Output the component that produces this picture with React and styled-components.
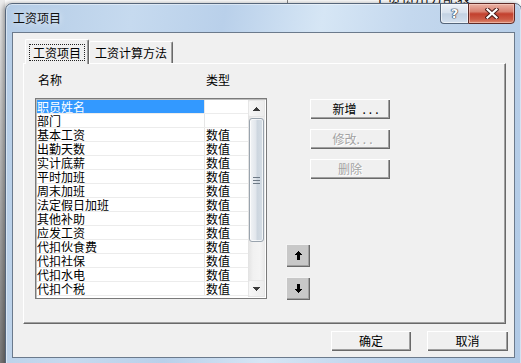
import React from "react";
import styled, { createGlobalStyle } from "styled-components";

const FONT = `"Noto Sans CJK SC", "Noto Sans CJK JP", "Noto Sans", sans-serif`;

const Global = createGlobalStyle`
  html, body { margin: 0; padding: 0; background: #fff; overflow: hidden; }
  body { font-family: ${FONT}; font-size: 12px; color: #000; }
  * { box-sizing: border-box; }
`;

const Desktop = styled.div`
  position: relative;
  width: 521px;
  height: 363px;
  overflow: hidden;
  background: linear-gradient(#ececec, #7c7c7c) left top / 5px 100% no-repeat, #fff;
`;

const BehindText = styled.div`
  position: absolute;
  top: -11px;
  left: 373px;
  font-size: 14px;
  line-height: 16px;
  color: #111;
  white-space: nowrap;
`;

const BehindLine = styled.div`
  position: absolute;
  top: 0;
  left: 287px;
  width: 1px;
  height: 4px;
  background: #8a8a8a;
`;

const Window = styled.div`
  position: absolute;
  left: 5px;
  top: 3px;
  width: 517px;
  height: 372px;
  border: 1px solid #56667a;
  border-radius: 7px 7px 0 0;
  background: linear-gradient(100deg, #b4cce6 0%, #c6daef 22%, #b9d0ea 38%, #d6e6f5 55%, #c4d8ee 70%, #b0c9e5 100%);
  box-shadow: inset 0 0 0 1px rgba(255, 255, 255, 0.45), -2px 0 5px rgba(0, 0, 0, 0.35);
  display: flex;
  flex-direction: column;
`;

const TitleBar = styled.div`
  height: 28px;
  display: flex;
  align-items: center;
  padding: 0 0 2px 7px;
  font-size: 12px;
  color: #101010;
  text-shadow: 0 0 6px rgba(255, 255, 255, 0.9);
`;

const CaptionButtons = styled.div`
  position: absolute;
  top: -1px;
  right: 6px;
  display: flex;
  height: 21px;
`;

const HelpButton = styled.div`
  width: 28px;
  height: 21px;
  border: 1px solid #55657a;
  border-right: none;
  border-radius: 0 0 0 4px;
  background: linear-gradient(#edf2f8 0%, #d8e2ee 45%, #c3d2e3 52%, #d4e0ee 100%);
  box-shadow: inset 0 0 0 1px rgba(255, 255, 255, 0.6);
  display: flex;
  align-items: center;
  justify-content: center;
  font-family: "DejaVu Sans", sans-serif;
  font-weight: bold;
  font-size: 13px;
  color: #fff;
  text-shadow: 0 0 1px #2e3c50, 0 0 1px #2e3c50, 0 0 1px #2e3c50, 0 0 1px #2e3c50;
`;

const CloseButton = styled.div`
  width: 47px;
  height: 21px;
  border: 1px solid #5e2a26;
  border-radius: 0 0 4px 0;
  background: linear-gradient(#eab3a6 0%, #d8806f 40%, #c2402e 52%, #cc5a45 80%, #dc8a70 100%);
  box-shadow: inset 0 0 0 1px rgba(255, 220, 210, 0.5);
  display: flex;
  align-items: center;
  justify-content: center;
`;

const FrameBody = styled.div`
  flex: 1;
  padding: 0 6px;
`;

const Client = styled.div`
  height: 326px;
  border: 1px solid #6b7a8c;
  background: #f0f0f0;
  display: flex;
  flex-direction: column;
`;

const TabStrip = styled.div`
  display: flex;
  align-items: flex-end;
  height: 25px;
  margin: 6px 0 0 12px;
  position: relative;
  z-index: 1;
`;

const Tab = styled.div`
  width: ${(p) => p.$w}px;
  height: ${(p) => (p.$active ? 25 : 22)}px;
  margin-bottom: ${(p) => (p.$active ? 0 : 1)}px;
  background: #f0f0f0;
  border-top: 1px solid #fff;
  border-left: 1px solid #fff;
  border-right: 1px solid #696969;
  box-shadow: inset -1px 0 #a0a0a0;
  border-radius: 2px 2px 0 0;
  display: flex;
  align-items: ${(p) => (p.$active ? "flex-start" : "center")};
  padding-top: ${(p) => (p.$active ? 4 : 0)}px;
  justify-content: center;
  font-size: 12px;
  line-height: 15px;
`;

const FocusText = styled.span`
  border: 1px dotted #222;
  padding: 0 3px;
  line-height: 15px;
`;

const Panel = styled.div`
  width: 483px;
  height: 261px;
  margin: -1px 0 0 10px;
  border-top: 1px solid #fff;
  border-left: 1px solid #fff;
  border-right: 1px solid #696969;
  border-bottom: 1px solid #696969;
  box-shadow: inset -1px -1px #a0a0a0;
  padding-left: 11px;
  display: flex;
  align-items: flex-start;
`;

const LeftCol = styled.div`
  padding-top: 9px;
  display: flex;
  flex-direction: column;
`;

const HeaderRow = styled.div`
  display: flex;
  height: 14px;
  line-height: 14px;
  margin-bottom: 11px;
  font-size: 12px;
`;

const HeaderCell = styled.div`
  width: ${(p) => p.$w}px;
  padding-left: 3px;
`;

const ListBox = styled.div`
  width: 232px;
  height: 201px;
  border: 1px solid #7a7a7a;
  box-shadow: inset 1px 1px #bdbdbd;
  padding: 1px;
  background: #fff;
  display: flex;
`;

const Rows = styled.div`
  flex: 1;
  display: flex;
  flex-direction: column;
`;

const Row = styled.div`
  display: flex;
  height: 14px;
  border-bottom: 1px solid #ececec;
  font-size: 12px;
  line-height: 13px;
`;

const NameCell = styled.div`
  width: 167px;
  white-space: nowrap;
  background: ${(p) => (p.$sel ? "#3399ff" : "transparent")};
  color: ${(p) => (p.$sel ? "#fff" : "#000")};
`;

const TypeCell = styled.div`
  flex: 1;
  border-left: 1px solid #e6e6e6;
  padding-left: 1px;
  white-space: nowrap;
`;

const ScrollBar = styled.div`
  width: 17px;
  display: flex;
  flex-direction: column;
  background: linear-gradient(to right, #e2e2e2 0%, #f1f1f1 30%, #f4f4f4 70%, #e8e8e8 100%);
`;

const ScrollArrow = styled.div`
  height: 17px;
  display: flex;
  align-items: center;
  justify-content: center;
  border: 1px solid #e6e6e6;
  border-radius: 2px;
  background: linear-gradient(to right, #f7f7f7, #ececec);
`;

const Thumb = styled.div`
  height: 124px;
  margin: 1px 1px 0 1px;
  border: 1px solid #9aa4ae;
  border-radius: 3px;
  background: linear-gradient(to right, #f2f4f6 0%, #e1e6ec 45%, #cdd6df 55%, #d5dde5 100%);
  box-shadow: inset 0 0 0 1px rgba(255, 255, 255, 0.7);
  display: flex;
  align-items: center;
  justify-content: center;
`;

const Track = styled.div`
  flex: 1;
`;

const ArrowCol = styled.div`
  margin-left: 19px;
  padding-top: 180px;
  display: flex;
  flex-direction: column;
  gap: 10px;
`;

const ArrowButton = styled.div`
  width: 24px;
  height: 23px;
  background: #c8c8c8;
  box-shadow: inset 1px 1px #f4f4f4, inset -1px -1px #696969, inset -2px -2px #a0a0a0;
  display: flex;
  align-items: center;
  justify-content: center;
`;

const ButtonCol = styled.div`
  padding-top: 35px;
  display: flex;
  flex-direction: column;
  gap: 10px;
`;

const Button = styled.div`
  width: ${(p) => p.$w}px;
  height: 20px;
  background: #f0f0f0;
  box-shadow: inset 1px 1px #fff, inset -1px -1px #696969, inset -2px -2px #a0a0a0;
  display: flex;
  align-items: center;
  justify-content: center;
  padding-left: ${(p) => p.$shift || 0}px;
  padding-bottom: 1px;
  font-size: 12px;
  line-height: 14px;
  white-space: nowrap;
  color: ${(p) => (p.$disabled ? "#a3a3a3" : "#000")};
  text-shadow: ${(p) => (p.$disabled ? "1px 1px #fff" : "none")};
`;

const Dots = styled.span`
  letter-spacing: 3px;
  margin-left: ${(p) => p.$gap || 0}px;
`;

const Footer = styled.div`
  display: flex;
  justify-content: flex-end;
  gap: 16px;
  margin-top: 7px;
  padding-right: 6px;
`;

const rows = [
  ["职员姓名", ""],
  ["部门", ""],
  ["基本工资", "数值"],
  ["出勤天数", "数值"],
  ["实计底薪", "数值"],
  ["平时加班", "数值"],
  ["周末加班", "数值"],
  ["法定假日加班", "数值"],
  ["其他补助", "数值"],
  ["应发工资", "数值"],
  ["代扣伙食费", "数值"],
  ["代扣社保", "数值"],
  ["代扣水电", "数值"],
  ["代扣个税", "数值"],
];

const Tri = ({ up, color = "#3a3a3a" }) => (
  <svg width="7" height="4" viewBox="0 0 7 4" shapeRendering="crispEdges">
    <path d={up ? "M3.5 0 L7 4 L0 4 Z" : "M0 0 L7 0 L3.5 4 Z"} fill={color} />
  </svg>
);

const BigArrow = ({ up }) => (
  <svg width="7" height="9" viewBox="0 0 7 9" shapeRendering="crispEdges">
    <path
      d={up ? "M3.5 0 L7 4 L5 4 L5 9 L2 9 L2 4 L0 4 Z" : "M2 0 L5 0 L5 5 L7 5 L3.5 9 L0 5 L2 5 Z"}
      fill="#000"
    />
  </svg>
);

const Grip = () => (
  <svg width="7" height="7" viewBox="0 0 7 7" shapeRendering="crispEdges">
    <path d="M0 0.5 H7 M0 3.5 H7 M0 6.5 H7" stroke="#6e7a86" strokeWidth="1" />
  </svg>
);

const CloseGlyph = () => (
  <svg width="14" height="11" viewBox="0 0 14 11">
    <path d="M2.5 1.5 L11.5 9.5 M11.5 1.5 L2.5 9.5" stroke="#4a1c18" strokeWidth="4.2" strokeLinecap="square" />
    <path d="M2.5 1.5 L11.5 9.5 M11.5 1.5 L2.5 9.5" stroke="#fff" strokeWidth="2.2" strokeLinecap="square" />
  </svg>
);

export default function App() {
  return (
    <>
      <Global />
      <Desktop>
        <BehindText>工资费用分配表</BehindText>
        <BehindLine />
        <Window>
          <TitleBar>工资项目</TitleBar>
          <CaptionButtons>
            <HelpButton>?</HelpButton>
            <CloseButton>
              <CloseGlyph />
            </CloseButton>
          </CaptionButtons>
          <FrameBody>
            <Client>
              <TabStrip>
                <Tab $active $w={64}>
                  <FocusText>工资项目</FocusText>
                </Tab>
                <Tab $w={84}>工资计算方法</Tab>
              </TabStrip>
              <Panel>
                <LeftCol>
                  <HeaderRow>
                    <HeaderCell $w={168}>名称</HeaderCell>
                    <HeaderCell $w={60}>类型</HeaderCell>
                  </HeaderRow>
                  <ListBox>
                    <Rows>
                      {rows.map(([n, t], i) => (
                        <Row key={n}>
                          <NameCell $sel={i === 0}>{n}</NameCell>
                          <TypeCell>{t}</TypeCell>
                        </Row>
                      ))}
                    </Rows>
                    <ScrollBar>
                      <ScrollArrow>
                        <Tri up />
                      </ScrollArrow>
                      <Thumb>
                        <Grip />
                      </Thumb>
                      <Track />
                      <ScrollArrow>
                        <Tri />
                      </ScrollArrow>
                    </ScrollBar>
                  </ListBox>
                </LeftCol>
                <ArrowCol>
                  <ArrowButton>
                    <BigArrow up />
                  </ArrowButton>
                  <ArrowButton>
                    <BigArrow />
                  </ArrowButton>
                </ArrowCol>
                <ButtonCol>
                  <Button $w={80} $shift={14}>
                    新增<Dots $gap={6}>...</Dots>
                  </Button>
                  <Button $w={80} $shift={8} $disabled>
                    修改<Dots>...</Dots>
                  </Button>
                  <Button $w={80} $disabled>
                    删除
                  </Button>
                </ButtonCol>
              </Panel>
              <Footer>
                <Button $w={80}>确定</Button>
                <Button $w={81}>取消</Button>
              </Footer>
            </Client>
          </FrameBody>
        </Window>
      </Desktop>
    </>
  );
}
